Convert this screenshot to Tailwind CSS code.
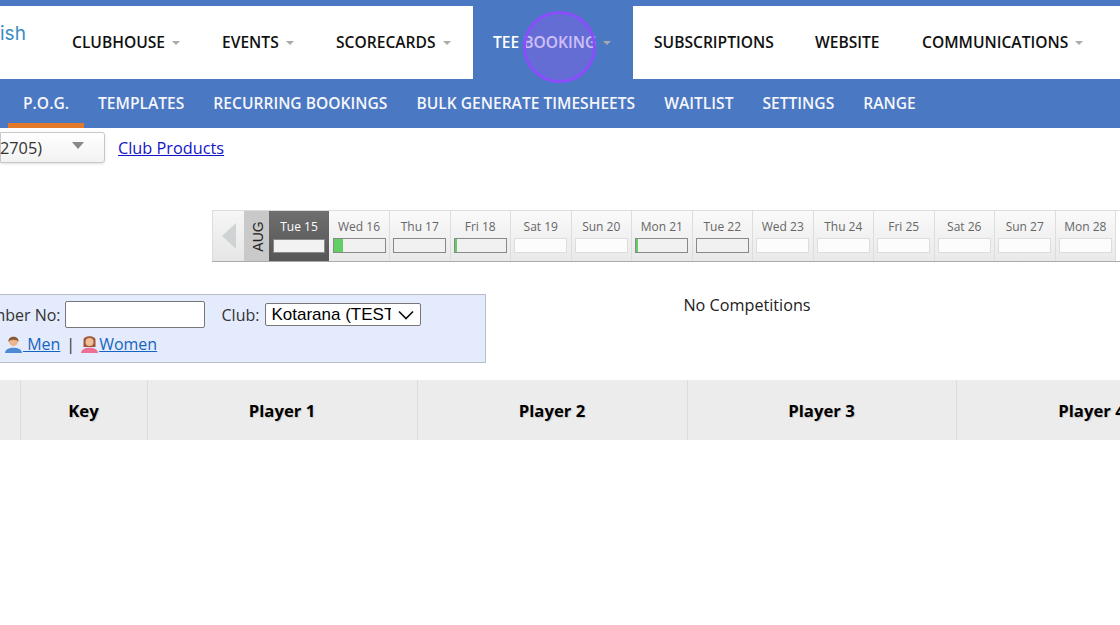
<!DOCTYPE html>
<html lang="en">
<head>
    <meta charset="UTF-8">
    <title>Tee Booking</title>
    <script src="https://cdn.jsdelivr.net/npm/@tailwindcss/browser@4"></script>
</head>
<body class="bg-white w-[1120px] h-[625px] overflow-hidden relative font-['Open_Sans',sans-serif] text-black">

    <!-- main nav -->
    <div class="bg-[#4b78c2] pt-[6px]">
        <div class="bg-white h-[73px] flex items-center text-[15.6px] font-semibold text-[#111] whitespace-nowrap">
            <div class="w-[72px] text-[19px] font-normal text-[#3a8cc4] font-['Inter',sans-serif] pb-[16px] shrink-0">ish</div>
            <div class="flex items-center h-full w-[150px] shrink-0">CLUBHOUSE<span class="ml-[7px] border-x-[4.5px] border-t-[4px] border-x-transparent border-t-[#aaa]"></span></div>
            <div class="flex items-center h-full w-[114px] shrink-0">EVENTS<span class="ml-[7px] border-x-[4.5px] border-t-[4px] border-x-transparent border-t-[#aaa]"></span></div>
            <div class="flex items-center h-full w-[137px] shrink-0">SCORECARDS<span class="ml-[7px] border-x-[4.5px] border-t-[4px] border-x-transparent border-t-[#aaa]"></span></div>
            <div class="flex items-center h-full w-[160px] shrink-0 pl-[20px] bg-[#4b78c2] text-white">TEE BOOKING<span class="ml-[7px] border-x-[4.5px] border-t-[4px] border-x-transparent border-t-[#aaa]"></span></div>
            <div class="flex items-center h-full w-[182px] shrink-0 pl-[21px]">SUBSCRIPTIONS</div>
            <div class="flex items-center h-full w-[107px] shrink-0">WEBSITE</div>
            <div class="flex items-center h-full shrink-0">COMMUNICATIONS<span class="ml-[7px] border-x-[4.5px] border-t-[4px] border-x-transparent border-t-[#aaa]"></span></div>
        </div>
    </div>

    <!-- sub nav -->
    <div class="bg-[#4b78c2] h-[49px] flex pl-[8px] text-[15.6px] font-semibold text-[#f4f6fb] whitespace-nowrap">
        <div class="flex items-center px-[15px] border-b-[5px] border-[#e2792a] pt-[5px]">P.O.G.</div>
        <div class="flex items-center pl-[14px] pr-[14.5px]">TEMPLATES</div>
        <div class="flex items-center px-[14.5px]">RECURRING BOOKINGS</div>
        <div class="flex items-center px-[14.5px]">BULK GENERATE TIMESHEETS</div>
        <div class="flex items-center px-[14.5px]">WAITLIST</div>
        <div class="flex items-center px-[14.5px]">SETTINGS</div>
        <div class="flex items-center px-[14.5px]">RANGE</div>
    </div>

    <!-- course select -->
    <div class="flex items-center h-[32px] mt-[3.5px] text-[16.3px]">
        <div class="w-[105px] h-[31px] border border-[#c8c8c8] rounded-r-[3px] bg-gradient-to-b from-white to-[#f2f2f2] shadow-sm flex items-center justify-between pr-[20px] text-[#333]">
            <span class="-ml-[1px] pt-[1px]">2705)</span>
            <span class="border-x-[6px] border-t-[7px] border-x-transparent border-t-[#888] mb-[4px]"></span>
        </div>
        <a class="ml-[13px] pt-[2px] text-[#1414c8] underline">Club Products</a>
    </div>

    <!-- date strip -->
    <div class="ml-[212px] mt-[46.5px] h-[52px] flex border-t border-b border-t-[#ddd] border-b-[#aaa] text-[12px] text-[#666] whitespace-nowrap">
        <div class="w-[32px] shrink-0 bg-gradient-to-b from-[#f6f6f6] to-[#e6e6e6] flex items-center justify-center border-l border-[#ddd]">
            <svg width="16" height="26" viewBox="0 0 16 26"><path d="M15 0 L1 13 L15 26 Z" fill="#cfd3d3"/></svg>
        </div>
        <div class="w-[25px] shrink-0 bg-[#c9c9c9] flex items-center justify-center">
            <span class="-rotate-90 ml-[3px] text-[14px] font-['Liberation_Sans',sans-serif] text-[#222]">AUG</span>
        </div>
        <div class="w-[60px] shrink-0 bg-gradient-to-b from-[#6e6e6e] to-[#565656] text-white flex flex-col items-center pt-[7px]">
            Tue 15
            <div class="w-[52px] h-[14px] mt-[3px] bg-[#f2f2f2] border border-[#8a8a8a]"></div>
        </div>
        <div class="w-[61px] shrink-0 border-r border-[#ddd] bg-gradient-to-b from-[#fafafa] to-[#e9e9e9] flex flex-col items-center pt-[7px]">
            Wed 16
            <div class="w-[53px] h-[15px] mt-[2px] bg-[#f1f1f1] border border-[#888] flex"><div class="w-[9px] bg-[#62ce66]"></div></div>
        </div>
        <div class="w-[60.5px] shrink-0 border-r border-[#ddd] bg-gradient-to-b from-[#fafafa] to-[#e9e9e9] flex flex-col items-center pt-[7px]">
            Thu 17
            <div class="w-[53px] h-[15px] mt-[2px] bg-[#f1f1f1] border border-[#888]"></div>
        </div>
        <div class="w-[60.5px] shrink-0 border-r border-[#ddd] bg-gradient-to-b from-[#fafafa] to-[#e9e9e9] flex flex-col items-center pt-[7px]">
            Fri 18
            <div class="w-[53px] h-[15px] mt-[2px] bg-[#f1f1f1] border border-[#888] flex"><div class="w-[2px] bg-[#62ce66]"></div></div>
        </div>
        <div class="w-[60.5px] shrink-0 border-r border-[#ddd] bg-gradient-to-b from-[#fafafa] to-[#e9e9e9] flex flex-col items-center pt-[7px]">
            Sat 19
            <div class="w-[53px] h-[15px] mt-[2px] bg-[#fcfcfc] border border-[#ddd]"></div>
        </div>
        <div class="w-[60.5px] shrink-0 border-r border-[#ddd] bg-gradient-to-b from-[#fafafa] to-[#e9e9e9] flex flex-col items-center pt-[7px]">
            Sun 20
            <div class="w-[53px] h-[15px] mt-[2px] bg-[#fcfcfc] border border-[#ddd]"></div>
        </div>
        <div class="w-[60.5px] shrink-0 border-r border-[#ddd] bg-gradient-to-b from-[#fafafa] to-[#e9e9e9] flex flex-col items-center pt-[7px]">
            Mon 21
            <div class="w-[53px] h-[15px] mt-[2px] bg-[#f1f1f1] border border-[#888] flex"><div class="w-[2px] bg-[#62ce66]"></div></div>
        </div>
        <div class="w-[60.5px] shrink-0 border-r border-[#ddd] bg-gradient-to-b from-[#fafafa] to-[#e9e9e9] flex flex-col items-center pt-[7px]">
            Tue 22
            <div class="w-[53px] h-[15px] mt-[2px] bg-[#f1f1f1] border border-[#888]"></div>
        </div>
        <div class="w-[60.5px] shrink-0 border-r border-[#ddd] bg-gradient-to-b from-[#fafafa] to-[#e9e9e9] flex flex-col items-center pt-[7px]">
            Wed 23
            <div class="w-[53px] h-[15px] mt-[2px] bg-[#fcfcfc] border border-[#ddd]"></div>
        </div>
        <div class="w-[60.5px] shrink-0 border-r border-[#ddd] bg-gradient-to-b from-[#fafafa] to-[#e9e9e9] flex flex-col items-center pt-[7px]">
            Thu 24
            <div class="w-[53px] h-[15px] mt-[2px] bg-[#fcfcfc] border border-[#ddd]"></div>
        </div>
        <div class="w-[60.5px] shrink-0 border-r border-[#ddd] bg-gradient-to-b from-[#fafafa] to-[#e9e9e9] flex flex-col items-center pt-[7px]">
            Fri 25
            <div class="w-[53px] h-[15px] mt-[2px] bg-[#fcfcfc] border border-[#ddd]"></div>
        </div>
        <div class="w-[60.5px] shrink-0 border-r border-[#ddd] bg-gradient-to-b from-[#fafafa] to-[#e9e9e9] flex flex-col items-center pt-[7px]">
            Sat 26
            <div class="w-[53px] h-[15px] mt-[2px] bg-[#fcfcfc] border border-[#ddd]"></div>
        </div>
        <div class="w-[60.5px] shrink-0 border-r border-[#ddd] bg-gradient-to-b from-[#fafafa] to-[#e9e9e9] flex flex-col items-center pt-[7px]">
            Sun 27
            <div class="w-[53px] h-[15px] mt-[2px] bg-[#fcfcfc] border border-[#ddd]"></div>
        </div>
        <div class="w-[60.5px] shrink-0 border-r border-[#ddd] bg-gradient-to-b from-[#fafafa] to-[#e9e9e9] flex flex-col items-center pt-[7px]">
            Mon 28
            <div class="w-[53px] h-[15px] mt-[2px] bg-[#fcfcfc] border border-[#ddd]"></div>
        </div>
    </div>

    <!-- filters + competitions -->
    <div class="flex mt-[32px] h-[69px]">
        <div class="w-[486px] shrink-0 bg-[#e4ebfc] border border-l-0 border-[#b9bdc7] pt-[6px] text-[16px] text-[#333] overflow-hidden whitespace-nowrap">
            <div class="flex items-center h-[27px] -ml-[33px]">
                <span>Member No:</span>
                <div class="ml-[4px] w-[140px] h-[27px] bg-white border border-[#777] rounded-[2px]"></div>
                <span class="ml-[17px]">Club:</span>
                <div class="ml-[6px] w-[156px] h-[23px] bg-white border border-[#777] rounded-[2px] flex items-center pl-[5px] font-['Liberation_Sans',sans-serif] text-[17px] text-black">
                    <span class="w-[120px] overflow-hidden">Kotarana (TEST)</span>
                    <svg class="ml-[6px]" width="18" height="10" viewBox="0 0 18 10"><path d="M2 1.5 L9 8.5 L16 1.5" fill="none" stroke="#111" stroke-width="1.7"/></svg>
                </div>
            </div>
            <div class="flex items-center h-[24px] mt-[4px] pl-[4px]">
                <svg width="19" height="19" viewBox="0 0 19 19"><path d="M1 18 C1 11 18 11 18 18Z" fill="#4c8ad6"/><circle cx="9.5" cy="6.5" r="4.5" fill="#f0b48c"/><path d="M4.5 7 C3.5 0 15.5 0 14.5 7 C13 4 6 4 4.5 7Z" fill="#8a5a35"/></svg>
                <a class="text-[#1565c0] underline whitespace-pre"> Men</a>
                <span class="mx-[6px]">|</span>
                <svg class="-ml-[1px]" width="19" height="19" viewBox="0 0 19 19"><path d="M3.5 12 L3.5 5 C3.5 0 15.5 0 15.5 5 L15.5 12Z" fill="#9c5a3a"/><path d="M1 18 C1 11 18 11 18 18Z" fill="#ec6f94"/><circle cx="9.5" cy="7" r="4" fill="#f3bd98"/></svg>
                <a class="text-[#1565c0] underline">Women</a>
            </div>
        </div>
        <div class="w-[522px] text-center text-[16.2px] text-[#222] -mt-[1px]">No Competitions</div>
    </div>

    <!-- tee sheet header -->
    <div class="mt-[17px] h-[60px] flex bg-[#ececec] text-[16.7px] font-bold text-black whitespace-nowrap [text-shadow:1px_1px_1px_#ccc]">
        <div class="w-[20.5px] shrink-0 border-r border-[#dcdcdc]"></div>
        <div class="w-[127px] shrink-0 border-r border-[#dcdcdc] flex items-center justify-center pt-[1px]">Key</div>
        <div class="w-[270px] shrink-0 border-r border-[#dcdcdc] flex items-center justify-center pt-[1px]">Player 1</div>
        <div class="w-[270px] shrink-0 border-r border-[#dcdcdc] flex items-center justify-center pt-[1px]">Player 2</div>
        <div class="w-[269px] shrink-0 border-r border-[#dcdcdc] flex items-center justify-center pt-[1px]">Player 3</div>
        <div class="w-[270px] shrink-0 flex items-center justify-center pt-[1px]">Player 4</div>
    </div>

    <!-- click highlight -->
    <div class="absolute left-[523px] top-[11px] w-[73px] h-[72px] rounded-full border-[3px] border-[#8a4dfb] bg-[#8a5cf0]/40"></div>

</body>
</html>
